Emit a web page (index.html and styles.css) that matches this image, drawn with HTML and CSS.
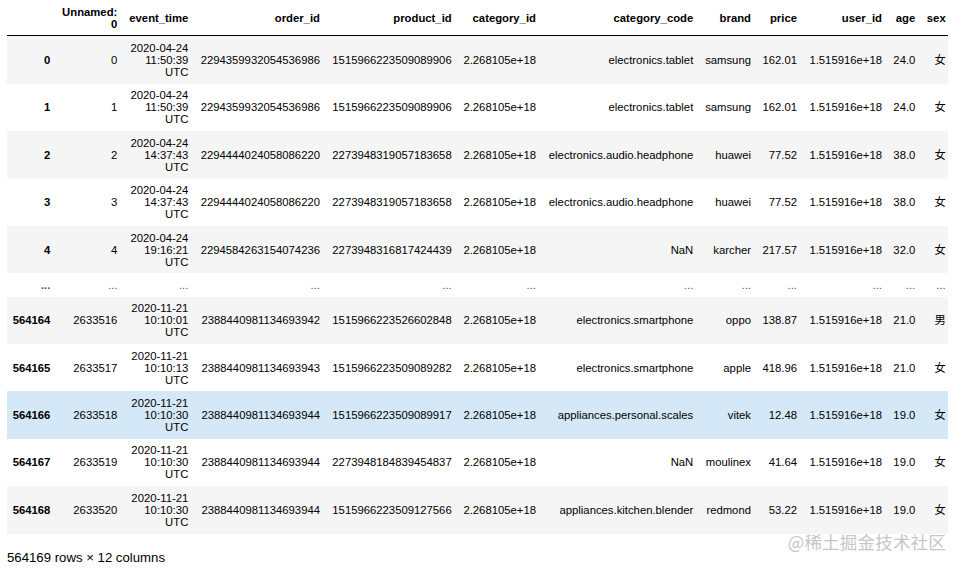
FILE: index.html
```html
<!DOCTYPE html>
<html>
<head>
<meta charset="utf-8">
<link rel="stylesheet" href="styles.css">
</head>
<body>
<div class="output">
<table class="dataframe">
<colgroup>
<col class="c-idx"><col class="c-unn"><col class="c-evt"><col class="c-oid"><col class="c-pid"><col class="c-cid"><col class="c-code"><col class="c-brand"><col class="c-price"><col class="c-uid"><col class="c-age"><col class="c-sex">
</colgroup>
<thead>
<tr><th></th><th>Unnamed: 0</th><th>event_time</th><th>order_id</th><th>product_id</th><th>category_id</th><th>category_code</th><th>brand</th><th>price</th><th>user_id</th><th>age</th><th>sex</th></tr>
</thead>
<tbody>
<tr><th>0</th><td>0</td><td>2020-04-24 11:50:39 UTC</td><td>2294359932054536986</td><td>1515966223509089906</td><td>2.268105e+18</td><td>electronics.tablet</td><td>samsung</td><td>162.01</td><td>1.515916e+18</td><td>24.0</td><td>女</td></tr>
<tr><th>1</th><td>1</td><td>2020-04-24 11:50:39 UTC</td><td>2294359932054536986</td><td>1515966223509089906</td><td>2.268105e+18</td><td>electronics.tablet</td><td>samsung</td><td>162.01</td><td>1.515916e+18</td><td>24.0</td><td>女</td></tr>
<tr><th>2</th><td>2</td><td>2020-04-24 14:37:43 UTC</td><td>2294444024058086220</td><td>2273948319057183658</td><td>2.268105e+18</td><td>electronics.audio.headphone</td><td>huawei</td><td>77.52</td><td>1.515916e+18</td><td>38.0</td><td>女</td></tr>
<tr><th>3</th><td>3</td><td>2020-04-24 14:37:43 UTC</td><td>2294444024058086220</td><td>2273948319057183658</td><td>2.268105e+18</td><td>electronics.audio.headphone</td><td>huawei</td><td>77.52</td><td>1.515916e+18</td><td>38.0</td><td>女</td></tr>
<tr><th>4</th><td>4</td><td>2020-04-24 19:16:21 UTC</td><td>2294584263154074236</td><td>2273948316817424439</td><td>2.268105e+18</td><td>NaN</td><td>karcher</td><td>217.57</td><td>1.515916e+18</td><td>32.0</td><td>女</td></tr>
<tr class="ell"><th>...</th><td>...</td><td>...</td><td>...</td><td>...</td><td>...</td><td>...</td><td>...</td><td>...</td><td>...</td><td>...</td><td>...</td></tr>
<tr><th>564164</th><td>2633516</td><td>2020-11-21 10:10:01 UTC</td><td>2388440981134693942</td><td>1515966223526602848</td><td>2.268105e+18</td><td>electronics.smartphone</td><td>oppo</td><td>138.87</td><td>1.515916e+18</td><td>21.0</td><td>男</td></tr>
<tr><th>564165</th><td>2633517</td><td>2020-11-21 10:10:13 UTC</td><td>2388440981134693943</td><td>1515966223509089282</td><td>2.268105e+18</td><td>electronics.smartphone</td><td>apple</td><td>418.96</td><td>1.515916e+18</td><td>21.0</td><td>女</td></tr>
<tr class="hover"><th>564166</th><td>2633518</td><td>2020-11-21 10:10:30 UTC</td><td>2388440981134693944</td><td>1515966223509089917</td><td>2.268105e+18</td><td>appliances.personal.scales</td><td>vitek</td><td>12.48</td><td>1.515916e+18</td><td>19.0</td><td>女</td></tr>
<tr><th>564167</th><td>2633519</td><td>2020-11-21 10:10:30 UTC</td><td>2388440981134693944</td><td>2273948184839454837</td><td>2.268105e+18</td><td>NaN</td><td>moulinex</td><td>41.64</td><td>1.515916e+18</td><td>19.0</td><td>女</td></tr>
<tr><th>564168</th><td>2633520</td><td>2020-11-21 10:10:30 UTC</td><td>2388440981134693944</td><td>1515966223509127566</td><td>2.268105e+18</td><td>appliances.kitchen.blender</td><td>redmond</td><td>53.22</td><td>1.515916e+18</td><td>19.0</td><td>女</td></tr>
</tbody>
</table>
<p class="shape">564169 rows × 12 columns</p>
<div class="watermark">@稀土掘金技术社区</div>
</div>
</body>
</html>
```
FILE: styles.css
```css
html, body {
  margin: 0;
  padding: 0;
  background: #fff;
}
body {
  font-family: "Liberation Sans", Arial, "Noto Sans CJK SC", sans-serif;
  color: #000;
}
.output {
  position: relative;
  padding: 0 7px;
  height: 569px;
}
.dataframe {
  table-layout: fixed;
  width: 940.7px;
  border-collapse: collapse;
  border-spacing: 0;
  font-size: 11.3px;
  line-height: 12px;
}
.c-idx { width: 49px; }
.c-unn { width: 67px; }
.c-evt { width: 71px; }
.c-oid { width: 131.7px; }
.c-pid { width: 131.7px; }
.c-cid { width: 84.3px; }
.c-code { width: 157.3px; }
.c-brand { width: 57.7px; }
.c-price { width: 46px; }
.c-uid { width: 85px; }
.c-age { width: 33.3px; }
.c-sex { width: 26.7px; }
.dataframe th,
.dataframe td {
  text-align: right;
  vertical-align: middle;
  padding: 5.7px;
  border: none;
  white-space: normal;
}
.dataframe th {
  font-weight: bold;
}
.dataframe td {
  font-weight: normal;
}
.dataframe thead {
  border-bottom: 1px solid #000;
}
.dataframe thead th:last-child,
.dataframe tbody td:last-child {
  padding-right: 2px;
  padding-left: 4px;
}
.dataframe tbody tr:nth-child(odd) {
  background: #f5f5f5;
}
.dataframe tbody tr.hover {
  background: #d4e8f8;
}
.dataframe tr.ell td,
.dataframe tr.ell th {
  color: #555;
}
.shape {
  margin: 16px 0 0;
  font-size: 13.2px;
  line-height: 15px;
}
.watermark {
  position: absolute;
  right: 17px;
  top: 531px;
  font-family: "Noto Sans CJK SC", "Liberation Sans", sans-serif;
  font-size: 17.5px;
  line-height: 22px;
  color: #c6c6c6;
  letter-spacing: 0.2px;
}
```
